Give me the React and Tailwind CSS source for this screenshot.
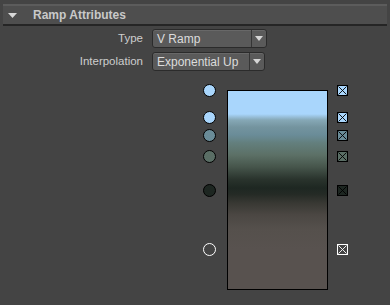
import React from "react";

const keys = [
  { y: 89.5, color: "#a9d6fc" },
  { y: 116, color: "#a9d6fc" },
  { y: 134, color: "#6a8c98" },
  { y: 155, color: "#5a6e65" },
  { y: 189.5, color: "#1d2621" },
  { y: 248.5, color: "#444444", selected: true },
];

const TOP = 82;

function Dropdown({ label, width }) {
  return (
    <div
      className="flex h-[19px] rounded-[3px] border border-[#2b2b2b] bg-[#5a5a5a] shadow-[inset_0_1px_0_#686868]"
      style={{ width }}
    >
      <div className="flex-1 flex items-center pl-[4px] text-[12px] text-[#dcdcdc] leading-none">
        {label}
      </div>
      <div className="w-[15px] border-l border-[#353535] flex items-center justify-center">
        <svg width="8" height="5" viewBox="0 0 8 5">
          <path d="M0 0H8L4 5Z" fill="#d6d6d6" />
        </svg>
      </div>
    </div>
  );
}

export default function App() {
  return (
    <div
      className="w-[390px] h-[305px] bg-[#444444] pt-[4px] overflow-hidden"
      style={{ fontFamily: '"Liberation Sans", Arial, sans-serif' }}
    >
      {/* Header */}
      <div className="ml-[3px] w-[384px] h-[22px] border-t-2 border-t-[#5c5c5c] border-b-2 border-b-[#252525] bg-[#4e4e4e] flex items-center">
        <svg className="ml-[5px]" width="9" height="5" viewBox="0 0 9 5">
          <path d="M0 0H9L4.5 5Z" fill="#d8d8d8" />
        </svg>
        <span className="ml-[16px] text-[12px] font-bold text-[#c9c9c9] leading-none">
          Ramp Attributes
        </span>
      </div>

      {/* Form rows */}
      <div className="mt-[3px] flex flex-col gap-[4px]">
        <div className="flex items-center">
          <div className="w-[143px] text-right text-[11.5px] text-[#cdcdcd]">Type</div>
          <div className="ml-[9px]">
            <Dropdown label="V Ramp" width={115} />
          </div>
        </div>
        <div className="flex items-center">
          <div className="w-[143px] text-right text-[11.5px] text-[#cdcdcd]">Interpolation</div>
          <div className="ml-[9px]">
            <Dropdown label="Exponential Up" width={113} />
          </div>
        </div>
      </div>

      {/* Ramp */}
      <div className="mt-[12px] flex h-[214px]">
        <div className="relative ml-[203px] w-[13px]">
          {keys.map((k, i) => (
            <div
              key={i}
              className={`absolute left-0 w-[13px] h-[13px] rounded-full border ${
                k.selected ? "border-white" : "border-black"
              }`}
              style={{ top: k.y - TOP - 6.5, background: k.color }}
            />
          ))}
        </div>
        <div className="ml-[11px] mt-[7px] w-[101px] h-[200px] border border-black bg-[linear-gradient(to_bottom,#a9d6fc_0px,#a9d6fc_23px,#86a8b6_29px,#74949f_36px,#6a8c98_44px,#637f7d_52px,#5c7066_64px,#46554b_76px,#2a342d_88px,#1e2722_97px,#242a25_103px,#383833_112px,#4b4743_124px,#55504c_138px,#58524f_158px,#58524f_198px)]" />
        <div className="relative ml-[9px] w-[11px]">
          {keys.map((k, i) => (
            <svg
              key={i}
              className="absolute left-0"
              style={{ top: k.y - TOP - 5.5 }}
              width="11"
              height="11"
              viewBox="0 0 11 11"
            >
              <rect
                x="0.5"
                y="0.5"
                width="10"
                height="10"
                fill={k.color}
                stroke={k.selected ? "#ffffff" : "#000000"}
              />
              <path
                d="M1.5 1.5L9.5 9.5M9.5 1.5L1.5 9.5"
                stroke={k.selected ? "#ffffff" : "#000000"}
                strokeWidth="0.9"
              />
            </svg>
          ))}
        </div>
      </div>
    </div>
  );
}
